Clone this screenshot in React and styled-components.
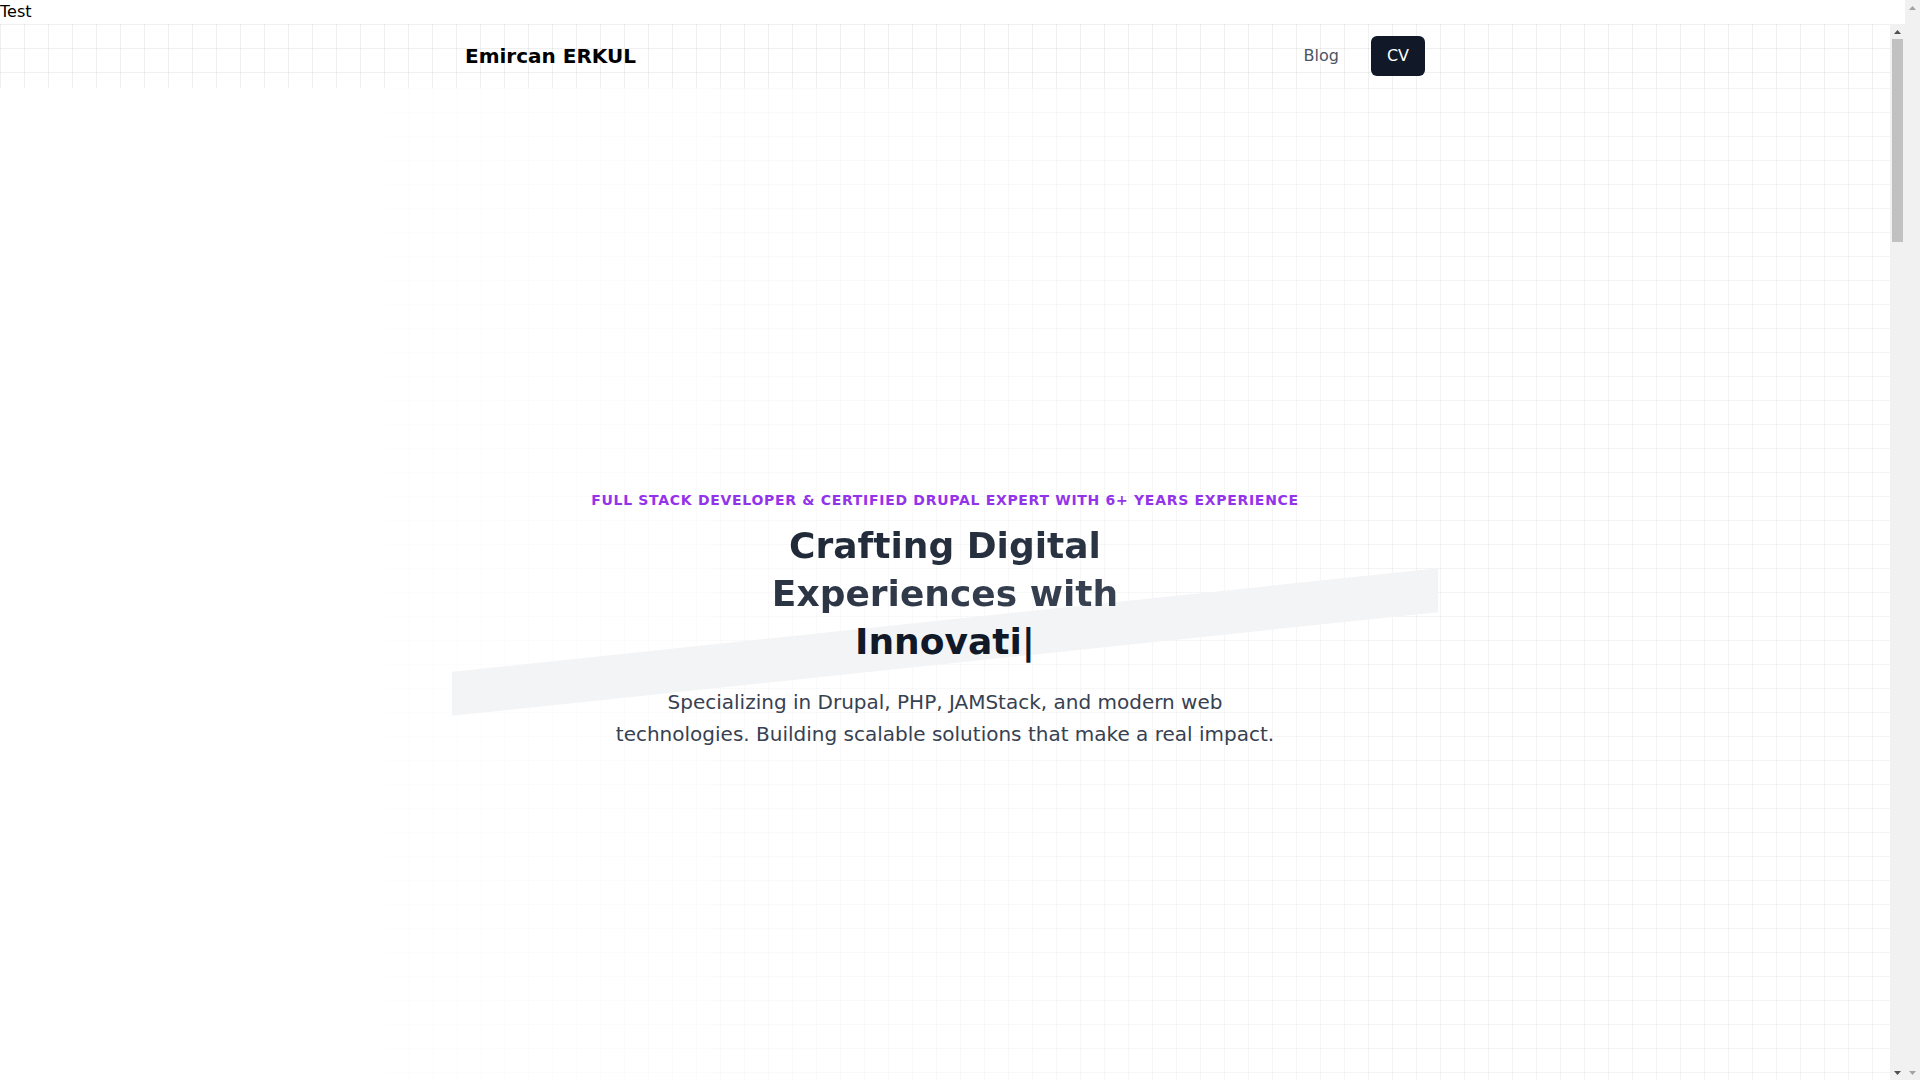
import React from 'react';
import styled, { createGlobalStyle } from 'styled-components';

const GlobalStyle = createGlobalStyle`
    html, body {
        height: 100%;
        overflow: hidden;
    }
    body {
        margin: 0;
        font-family: "DejaVu Sans", "Noto Sans", sans-serif;
        line-height: 1.5;
        color: #000;
        background: #fff;
    }
    *, *::before, *::after {
        box-sizing: border-box;
    }
`

const gridLines = (color) => `
    background-image:
        linear-gradient(to right, ${color} 1px, transparent 1px),
        linear-gradient(to bottom, ${color} 1px, transparent 1px);
    background-size: 24px 24px;
`

function Arrow({ up, disabled }) {
    return(
        <ArrowButton>
            <svg width="7" height="4" viewBox="0 0 7 4">
                <path d={up ? 'M0 4 L3.5 0 L7 4 Z' : 'M0 0 L7 0 L3.5 4 Z'} fill={disabled ? '#a3a3a3' : '#505050'} />
            </svg>
        </ArrowButton>
    );
}

function ScrollBar({ thumbTop, thumbSize, disabled }) {
    return(
        <Track>
            <Arrow up disabled={disabled} />
            <TrackBody>
                {!disabled && <Thumb style={{ marginTop: thumbTop, height: thumbSize }} />}
            </TrackBody>
            <Arrow disabled={disabled} />
        </Track>
    );
}

function Header() {
    return(
        <HeaderBar>
            <HeaderInner>
                <Brand href="#">Emircan ERKUL</Brand>
                <Nav>
                    <NavLink href="#">Blog</NavLink>
                    <NavLink href="#" $primary>CV</NavLink>
                </Nav>
            </HeaderInner>
        </HeaderBar>
    );
}

function Hero() {
    return(
        <HeroSection>
            <HeroInner>
                <Band />
                <Tagline>Full Stack Developer &amp; Certified Drupal Expert with 6+ Years Experience</Tagline>
                <Title>
                    <Lead>Crafting Digital Experiences with </Lead>
                    <Typed>Innovati</Typed><Cursor>|</Cursor>
                </Title>
                <Intro>
                    Specializing in Drupal, PHP, JAMStack, and modern web technologies. Building scalable solutions that make a real impact.
                </Intro>
            </HeroInner>
        </HeroSection>
    );
}

function App() {
    return(
        <>
            <GlobalStyle />
            <Frame>
                <Main>
                    <TopNote>Test</TopNote>
                    <Viewport>
                        <Scroller>
                            <Header />
                            <Hero />
                            <MoreContent />
                        </Scroller>
                        <ScrollBar thumbTop={0} thumbSize={203} />
                    </Viewport>
                </Main>
                <ScrollBar disabled />
            </Frame>
        </>
    );
}

export default App

const Frame = styled.div`
    display: flex;
    height: 100vh;
`
const Main = styled.div`
    flex: 1;
    min-width: 0;
    display: flex;
    flex-direction: column;
`
const TopNote = styled.div`
    font-size: 16px;
    line-height: 24px;
    height: 24px;
`
const Viewport = styled.div`
    flex: 1;
    min-height: 0;
    display: flex;
`
const Scroller = styled.div`
    flex: 1;
    min-width: 0;
    overflow-y: auto;
    background: #fff;
    scrollbar-width: none;
    &::-webkit-scrollbar {
        display: none;
    }
`
const Track = styled.div`
    width: 15px;
    flex: none;
    display: flex;
    flex-direction: column;
    background: #f1f1f1;
`
const ArrowButton = styled.div`
    height: 15px;
    flex: none;
    display: flex;
    align-items: center;
    justify-content: center;
`
const TrackBody = styled.div`
    flex: 1;
    padding: 0 2px;
`
const Thumb = styled.div`
    background: #c1c1c1;
`
const HeaderBar = styled.header`
    position: sticky;
    top: 0;
    z-index: 10;
    height: 64px;
    background-color: #fff;
    ${gridLines('rgba(0, 0, 0, 0.06)')}
`
const HeaderInner = styled.div`
    max-width: 1024px;
    height: 100%;
    margin: 0 auto;
    padding: 0 32px;
    display: flex;
    align-items: center;
    justify-content: space-between;
`
const Brand = styled.a`
    font-size: 20px;
    line-height: 28px;
    font-weight: 700;
    color: #000;
    text-decoration: none;
`
const Nav = styled.nav`
    display: flex;
    align-items: center;
    gap: 16px;
`
const NavLink = styled.a`
    padding: 8px 16px;
    border-radius: 6px;
    font-size: 16px;
    line-height: 24px;
    text-decoration: none;
    color: ${p => p.$primary ? '#fff' : '#4b5563'};
    background: ${p => p.$primary ? '#111827' : 'transparent'};
`
const HeroSection = styled.section`
    position: relative;
    min-height: 1064px;
    display: flex;
    align-items: center;
    justify-content: center;
    overflow: hidden;

    &::before {
        content: '';
        position: absolute;
        inset: 0;
        ${gridLines('rgba(0, 0, 0, 0.045)')}
        -webkit-mask-image: linear-gradient(to right, transparent 12%, #000 75%);
        mask-image: linear-gradient(to right, transparent 12%, #000 75%);
    }
`
const HeroInner = styled.div`
    position: relative;
    width: 100%;
    max-width: 1024px;
    padding: 0 32px;
    display: flex;
    flex-direction: column;
    align-items: center;
    text-align: center;

    & > *:not(:first-child) {
        position: relative;
        z-index: 1;
    }
`
const Band = styled.div`
    position: absolute;
    top: 130px;
    left: 19px;
    right: 19px;
    height: 44px;
    background: #f3f4f6;
    transform: skewY(-6deg);
`
const Tagline = styled.p`
    margin: 0 0 12px;
    font-size: 14px;
    line-height: 20px;
    font-weight: 700;
    letter-spacing: 0.05em;
    text-transform: uppercase;
    color: #9333ea;
`
const Title = styled.h1`
    margin: 0 0 20px;
    max-width: 380px;
    font-size: 36px;
    line-height: 48px;
    font-weight: 700;
    color: #111827;
`
const Lead = styled.span`
    background: linear-gradient(90deg, #1f2937, #374151);
    -webkit-background-clip: text;
    background-clip: text;
    color: transparent;
`
const Typed = styled.span`
    color: #111827;
`
const Cursor = styled.span`
    color: #111827;
`
const Intro = styled.p`
    margin: 0;
    max-width: 672px;
    font-size: 20px;
    line-height: 32.5px;
    color: #374151;
`
const MoreContent = styled.section`
    height: 4209px;
`
